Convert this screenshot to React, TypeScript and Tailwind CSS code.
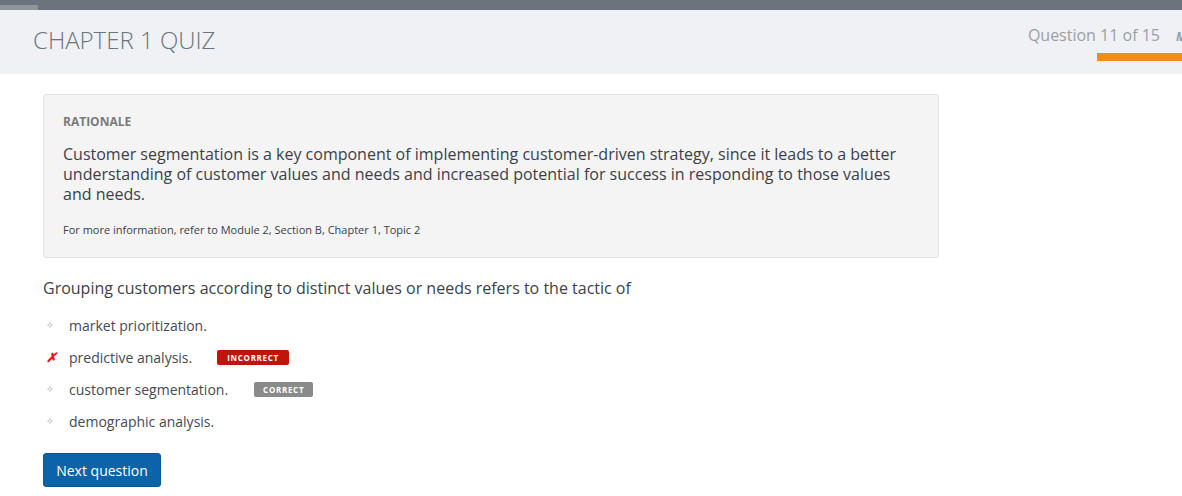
import React from "react";

const Bullet = () => (
  <svg width="8" height="8" viewBox="0 0 8 8" className="shrink-0">
    <path d="M4 0.5 L5 3 L7.5 4 L5 5 L4 7.5 L3 5 L0.5 4 L3 3 Z" fill="#c8c8c8" />
    <circle cx="4" cy="4" r="0.9" fill="#ffffff" />
  </svg>
);

const Option = ({ text, mark, badge }: { text: string; mark?: "x"; badge?: React.ReactNode }) => (
  <div className="flex items-center h-[32px]">
    <div className="w-[26px] flex items-center pl-[3px]">
      {mark === "x" ? (
        <span className="text-[#e8151b] font-bold italic text-[13px] leading-none">✗</span>
      ) : (
        <Bullet />
      )}
    </div>
    <span className="text-[14px] text-[#444a55]">{text}</span>
    {badge}
  </div>
);

export default function App() {
  return (
    <div className="w-[1182px] h-[496px] overflow-hidden bg-white" style={{ fontFamily: '"Open Sans", "Noto Sans", sans-serif' }}>
      <div className="h-[10px] bg-[#6b747d] flex items-end">
        <div className="w-[38px] h-[5px] bg-[#8e959b]" />
      </div>
      <div className="h-[64px] bg-[#f0f1f4] flex justify-between relative">
        <h1 className="pl-[33px] pt-[12px] text-[24px] font-light text-[#6b747d] tracking-[0px]">CHAPTER 1 QUIZ</h1>
        <div className="flex flex-col items-end pt-[13px]">
          <div className="flex items-baseline whitespace-nowrap">
            <span className="text-[16px] text-[#9aa0a6]">Question 11 of 15</span>
            <span className="ml-[16px] text-[12px] italic font-bold text-[#9aa0a6] w-[6px] overflow-hidden">M</span>
          </div>
          <div className="mt-[6px] w-[85px] h-[8px] bg-[#f28c1d]" />
        </div>
      </div>
      <div className="pl-[43px] pt-[20px]">
        <div className="w-[896px] bg-[#f4f4f4] border border-[#e2e2e2] rounded-[3px] pl-[19px] pr-[20px] pt-[18px] pb-[19px]">
          <div className="text-[12px] font-bold text-[#7a7a7a] leading-[18px]">RATIONALE</div>
          <p className="mt-[13px] text-[16px] leading-[20px] text-[#3d3f48]">
            Customer segmentation is a key component of implementing customer-driven strategy, since it leads to a better understanding of customer values and needs and increased potential for success in responding to those values and needs.
          </p>
          <p className="mt-[18px] text-[11px] leading-[16px] text-[#3d3f48]">
            For more information, refer to Module 2, Section B, Chapter 1, Topic 2
          </p>
        </div>
        <div className="mt-[18px] text-[16px] leading-[24px] text-[#3d3f48]">
          Grouping customers according to distinct values or needs refers to the tactic of
        </div>
        <div className="mt-[9px] flex flex-col">
          <Option text="market prioritization." />
          <Option
            text="predictive analysis."
            mark="x"
            badge={
              <span className="ml-[25px] h-[15px] px-[10px] rounded-[2px] bg-[#c0150b] text-white text-[8px] font-bold tracking-[0.7px] leading-[15px]">
                INCORRECT
              </span>
            }
          />
          <Option
            text="customer segmentation."
            badge={
              <span className="ml-[26px] h-[15px] px-[9px] rounded-[2px] bg-[#8a8a8a] text-white text-[8px] font-bold tracking-[0.7px] leading-[15px]">
                CORRECT
              </span>
            }
          />
          <Option text="demographic analysis." />
        </div>
        <button className="mt-[16px] w-[118px] h-[34px] rounded-[3px] bg-[#0b63a8] text-white text-[14px] border border-[#0a5690]">
          Next question
        </button>
      </div>
    </div>
  );
}
